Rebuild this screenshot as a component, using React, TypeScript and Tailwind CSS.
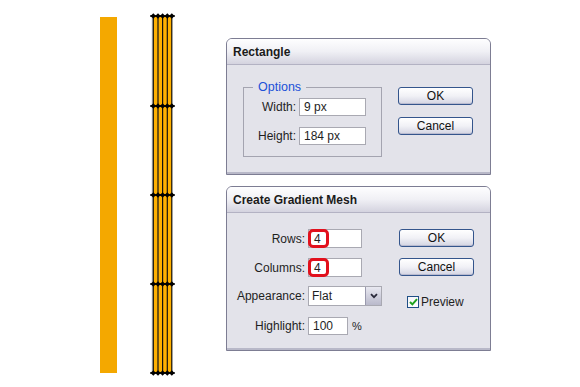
import React from "react";

function Btn({ children }: { children: React.ReactNode }) {
  return (
    <div className="w-[75px] h-[18px] rounded-[3px] border border-[#34558c] bg-gradient-to-b from-[#ffffff] via-[#f1f1f6] to-[#d3d4e2] shadow-[inset_0_-1px_0_#b9bbd0] flex items-center justify-center text-[12px] leading-none text-[#111]">
      {children}
    </div>
  );
}

function TitleBar({ children }: { children: React.ReactNode }) {
  return (
    <div className="h-[26px] rounded-t-[5px] bg-gradient-to-b from-[#fefeff] via-[#f0f0f5] to-[#d4d3df] border-b border-[#b3b2c3] flex items-center pl-[6px] text-[12px] font-bold text-[#1b1b1b]">
      {children}
    </div>
  );
}

function Mesh() {
  const xs = [5.3, 10, 14.6, 19.3, 23.8];
  const ys = [4, 94, 183, 272, 361];
  return (
    <svg width="28" height="365" viewBox="0 0 28 365" className="shrink-0 ml-[31px] mt-[12px]">
      <rect x="5" y="4" width="19" height="357" fill="#ffb000" />
      <line x1="4.3" y1="4" x2="4.3" y2="361" stroke="#9a9a9a" strokeWidth="0.8" />
      {xs.map((x) => (
        <line key={x} x1={x} y1="4" x2={x} y2="361" stroke="#111" strokeWidth="1.2" />
      ))}
      {ys.map((y) => (
        <g key={y}>
          <line x1="2.2" y1={y} x2="26.8" y2={y} stroke="#000" strokeWidth="1.7" />
          {xs.map((x) => (
            <path key={x} d={`M${x} ${y - 2.7} L${x + 2.7} ${y} L${x} ${y + 2.7} L${x - 2.7} ${y} Z`} fill="#000" />
          ))}
        </g>
      ))}
    </svg>
  );
}

export default function App() {
  return (
    <div className="w-[580px] h-[387px] bg-white flex items-start overflow-hidden font-['Liberation_Sans',Arial,sans-serif] text-[#1e1e1e]">
      <div className="ml-[100px] mt-[17px] w-[17px] h-[356px] bg-[#f4a800] shrink-0" />
      <Mesh />
      <div className="ml-[50px] mt-[38px] w-[265px] flex flex-col gap-[11px] shrink-0">
        {/* Rectangle dialog */}
        <div className="border border-[#7d7d93] rounded-t-[6px] bg-[#e3e3ea] shadow-[inset_0_-2px_0_#b8b8c8]">
          <TitleBar>Rectangle</TitleBar>
          <div className="h-[109px] pt-[22px] pl-[16px] flex items-start">
            <div className="relative w-[139px] h-[70px] border border-[#a4a4b0] pt-[10px] flex flex-col gap-[11px]">
              <div className="absolute -top-[9px] left-[9px] px-[5px] bg-[#e3e3ea] text-[12.5px] leading-[16px] text-[#2050d8]">
                Options
              </div>
              <div className="flex items-center">
                <div className="w-[52px] text-right text-[12px]">Width:</div>
                <div className="ml-[3px] w-[67px] h-[18px] bg-white border border-[#a9a9b2] flex items-center pl-[4px] text-[12px]">9 px</div>
              </div>
              <div className="flex items-center">
                <div className="w-[52px] text-right text-[12px]">Height:</div>
                <div className="ml-[3px] w-[67px] h-[18px] bg-white border border-[#a9a9b2] flex items-center pl-[4px] text-[12px]">184 px</div>
              </div>
            </div>
            <div className="ml-[16px] flex flex-col gap-[12px]">
              <Btn>OK</Btn>
              <Btn>Cancel</Btn>
            </div>
          </div>
        </div>

        {/* Gradient mesh dialog */}
        <div className="border border-[#7d7d93] rounded-t-[6px] bg-[#e3e3ea] shadow-[inset_0_-2px_0_#b8b8c8]">
          <TitleBar>Create Gradient Mesh</TitleBar>
          <div className="h-[137px] pt-[16px] flex items-start">
            <div className="w-[172px] flex flex-col text-[12px]">
              <div className="flex items-center h-[19px]">
                <div className="w-[78px] text-right">Rows:</div>
                <div className="ml-[3px] w-[54px] h-[19px] bg-white border border-[#a9a9b2] flex items-stretch">
                  <div className="-ml-px -my-px w-[21px] border-[3px] border-[#e2101c] rounded-[5px] bg-white flex items-center pl-[3px] text-[12px]">4</div>
                </div>
              </div>
              <div className="flex items-center h-[19px] mt-[10px]">
                <div className="w-[78px] text-right">Columns:</div>
                <div className="ml-[3px] w-[54px] h-[19px] bg-white border border-[#a9a9b2] flex items-stretch">
                  <div className="-ml-px -my-px w-[21px] border-[3px] border-[#e2101c] rounded-[5px] bg-white flex items-center pl-[3px] text-[12px]">4</div>
                </div>
              </div>
              <div className="flex items-center h-[20px] mt-[9px]">
                <div className="w-[78px] text-right">Appearance:</div>
                <div className="ml-[3px] w-[74px] h-[20px] bg-white border border-[#a9a9b2] flex items-stretch">
                  <div className="flex-1 flex items-center pl-[3px]">Flat</div>
                  <div className="w-[16px] border-l border-[#9a9aae] bg-gradient-to-b from-[#e9e9f1] to-[#b9b9cb] flex items-center justify-center">
                    <svg width="8" height="6" viewBox="0 0 8 6">
                      <path d="M1 1.2 L4 4.2 L7 1.2" fill="none" stroke="#2a2a3a" strokeWidth="1.8" />
                    </svg>
                  </div>
                </div>
              </div>
              <div className="flex items-center h-[18px] mt-[11px]">
                <div className="w-[78px] text-right">Highlight:</div>
                <div className="ml-[3px] w-[40px] h-[18px] bg-white border border-[#a9a9b2] flex items-center pl-[4px]">100</div>
                <div className="ml-[4px] text-[11px]">%</div>
              </div>
            </div>
            <div className="flex flex-col">
              <Btn>OK</Btn>
              <div className="mt-[11px]"><Btn>Cancel</Btn></div>
              <div className="mt-[17px] ml-[8px] flex items-center gap-[2px] text-[12px]">
                <div className="w-[12px] h-[12px] border border-[#1f4f86] bg-gradient-to-br from-[#f4f4f8] to-[#ffffff] flex items-center justify-center">
                  <svg width="9" height="8" viewBox="0 0 9 8">
                    <path d="M1 4 L3.4 6.4 L8 1.2" fill="none" stroke="#1fa21f" strokeWidth="2" />
                  </svg>
                </div>
                <span>Preview</span>
              </div>
            </div>
          </div>
        </div>
      </div>
    </div>
  );
}
